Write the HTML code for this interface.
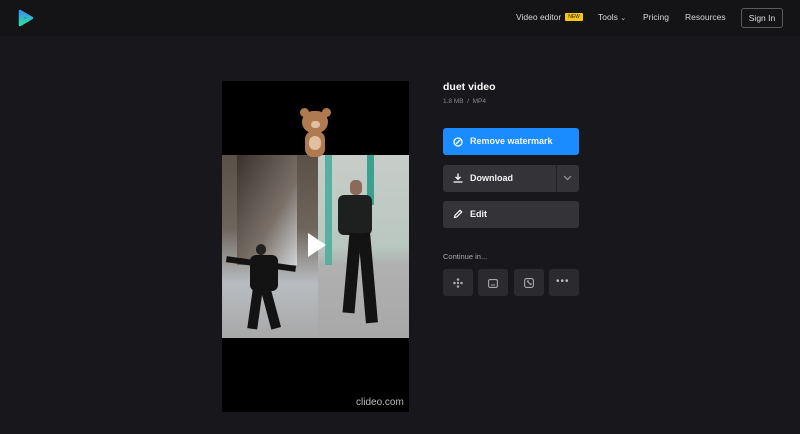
<!DOCTYPE html>
<html><head><meta charset="utf-8"><style>
*{margin:0;padding:0;box-sizing:border-box}
body{width:800px;height:434px;background:#18181c;font-family:"Liberation Sans",sans-serif;color:#fff;position:relative;overflow:hidden}
.hdr{position:absolute;left:0;top:0;width:800px;height:36px;background:#141417}
.nav{position:absolute;top:12px;font-size:8.5px;color:#d8d8dc}
.new{display:inline-block;background:#f5c518;color:#222;font-size:5px;padding:1px 3px;border-radius:1px;margin-left:4px;vertical-align:2px}
.sign{position:absolute;left:741px;top:8px;width:42px;height:20px;border:1px solid #5a5a60;border-radius:3px;font-size:8.5px;color:#ddd;text-align:center;line-height:18px}
.vid{position:absolute;left:222px;top:81px;width:187px;height:331px;background:#000;overflow:hidden}
.btn{position:absolute;left:443px;width:136px;height:27px;border-radius:3px;background:#333338;font-size:9px;font-weight:bold;line-height:27px;padding-left:27px;color:#f4f4f4}
.tile{position:absolute;top:269px;width:30px;height:27px;background:#2a2a2f;border-radius:3px}
.d{position:absolute;background:#131313}
</style></head><body>
<div class="hdr"></div>
<svg style="position:absolute;left:16px;top:8px" width="20" height="20" viewBox="0 0 20 20"><defs><linearGradient id="g" x1="0" y1="0" x2="0" y2="1"><stop offset="0" stop-color="#3a90f0"/><stop offset="1" stop-color="#2ce0a0"/></linearGradient></defs><path d="M4 3 L16 10 L4 17 Z M7.5 7 L7.5 13 L12 10 Z" fill="url(#g)" fill-rule="evenodd" stroke="url(#g)" stroke-width="2.5" stroke-linejoin="round"/></svg>
<div class="nav" style="left:516px">Video editor<span class="new">NEW</span></div>
<div class="nav" style="left:598px">Tools <span style="font-size:7px">&#8964;</span></div>
<div class="nav" style="left:643px">Pricing</div>
<div class="nav" style="left:685px">Resources</div>
<div class="sign">Sign In</div>

<div class="vid">
 <div style="position:absolute;left:0;top:74px;width:96px;height:183px;background:linear-gradient(180deg,#5a5048 0%,#6e655c 40%,#b8bcc0 70%,#a8a8a8 100%)"></div>
 <div style="position:absolute;left:15px;top:74px;width:60px;height:110px;background:linear-gradient(120deg,#3a322c,#7a7068 60%,#d0d4d8)"></div>
 <div style="position:absolute;left:96px;top:74px;width:91px;height:183px;background:linear-gradient(180deg,#c8ccc8 0%,#b8c8c0 50%,#b0b0b0 60%,#a8a8a8 100%)"></div>
 <div style="position:absolute;left:103px;top:74px;width:7px;height:110px;background:#5ab0a0"></div>
 <div style="position:absolute;left:145px;top:74px;width:7px;height:50px;background:#3aa090"></div>
 <div style="position:absolute;left:34px;top:163px;width:10px;height:11px;background:#222;border-radius:5px"></div>
 <div class="d" style="left:28px;top:174px;width:28px;height:36px;border-radius:6px"></div>
 <div class="d" style="left:4px;top:180px;width:70px;height:6px;transform:rotate(8deg)"></div>
 <div class="d" style="left:28px;top:208px;width:10px;height:40px;transform:rotate(8deg)"></div>
 <div class="d" style="left:44px;top:208px;width:10px;height:40px;transform:rotate(-15deg)"></div>
 <div style="position:absolute;left:128px;top:99px;width:12px;height:15px;background:#8a6a58;border-radius:5px"></div>
 <div class="d" style="left:116px;top:114px;width:34px;height:40px;border-radius:6px;background:#1e2020"></div>
 <div class="d" style="left:124px;top:152px;width:12px;height:80px;transform:rotate(5deg)"></div>
 <div class="d" style="left:140px;top:152px;width:12px;height:90px;transform:rotate(-5deg)"></div>
 <div style="position:absolute;left:86px;top:152px;width:0;height:0;border-left:18px solid #fff;border-top:12px solid transparent;border-bottom:12px solid transparent"></div>
 <div style="position:absolute;left:80px;top:30px;width:26px;height:22px;background:#b07a50;border-radius:12px"></div>
 <div style="position:absolute;left:78px;top:27px;width:9px;height:9px;background:#b07a50;border-radius:50%"></div>
 <div style="position:absolute;left:100px;top:27px;width:9px;height:9px;background:#b07a50;border-radius:50%"></div>
 <div style="position:absolute;left:89px;top:40px;width:9px;height:7px;background:#e0c0a0;border-radius:4px"></div>
 <div style="position:absolute;left:83px;top:50px;width:20px;height:26px;background:#b07a50;border-radius:8px"></div>
 <div style="position:absolute;left:87px;top:55px;width:12px;height:14px;background:#e0c0a0;border-radius:6px"></div>
 <div style="position:absolute;left:134px;top:316px;font-size:10px;color:#bbb">clideo.com</div>
</div>

<div style="position:absolute;left:443px;top:81px;font-size:10.5px;font-weight:bold">duet video</div>
<div style="position:absolute;left:443px;top:98px;font-size:6.5px;color:#888">1.8 MB &nbsp;/&nbsp; MP4</div>

<div class="btn" style="top:128px;background:#1a8cff">Remove watermark</div>
<svg style="position:absolute;left:453px;top:137px" width="10" height="10" viewBox="0 0 10 10"><circle cx="5" cy="5" r="4" fill="none" stroke="#fff" stroke-width="1.3"/><path d="M3 7L7 3" stroke="#fff" stroke-width="1.3"/></svg>
<div class="btn" style="top:165px">Download</div>
<div style="position:absolute;left:556px;top:165px;width:1px;height:27px;background:#222"></div>
<svg style="position:absolute;left:563px;top:175px" width="9" height="6" viewBox="0 0 9 6"><path d="M1 1L4.5 4.5L8 1" fill="none" stroke="#999" stroke-width="1.2"/></svg>
<svg style="position:absolute;left:453px;top:173px" width="10" height="10" viewBox="0 0 10 10"><path d="M5 0.5V6M2.5 3.8L5 6.3L7.5 3.8M0.5 9H9.5" fill="none" stroke="#fff" stroke-width="1.3"/></svg>
<div class="btn" style="top:201px">Edit</div>
<svg style="position:absolute;left:453px;top:209px" width="10" height="10" viewBox="0 0 10 10"><path d="M1.5 8.5L2 6.3L7 1.3L8.7 3L3.7 8Z" fill="none" stroke="#fff" stroke-width="1.2"/></svg>

<div style="position:absolute;left:443px;top:252px;font-size:7.5px;color:#aaa">Continue in...</div>
<div class="tile" style="left:443px"></div>
<div class="tile" style="left:478px"></div>
<div class="tile" style="left:514px"></div>
<div class="tile" style="left:549px"></div>
<svg style="position:absolute;left:453px;top:278px" width="10" height="10" viewBox="0 0 10 10"><g fill="#aaa"><circle cx="5" cy="1.5" r="1.3"/><circle cx="5" cy="8.5" r="1.3"/><circle cx="1.5" cy="5" r="1.3"/><circle cx="8.5" cy="5" r="1.3"/><circle cx="5" cy="5" r="1.2"/></g></svg>
<svg style="position:absolute;left:488px;top:279px" width="10" height="9" viewBox="0 0 10 9"><rect x="0.6" y="0.6" width="8.8" height="7.8" rx="1.5" fill="none" stroke="#aaa" stroke-width="1.1"/><path d="M3 6H7" stroke="#aaa"/></svg>
<svg style="position:absolute;left:524px;top:278px" width="10" height="10" viewBox="0 0 10 10"><rect x="0.6" y="0.6" width="8.8" height="8.8" rx="2" fill="none" stroke="#aaa" stroke-width="1.1"/><path d="M3 3L7 7M3 3H5M7 7V5" fill="none" stroke="#aaa"/></svg>
<div style="position:absolute;left:556px;top:276px;font-size:10px;color:#bbb;letter-spacing:1px">&#8226;&#8226;&#8226;</div>
</body></html>
